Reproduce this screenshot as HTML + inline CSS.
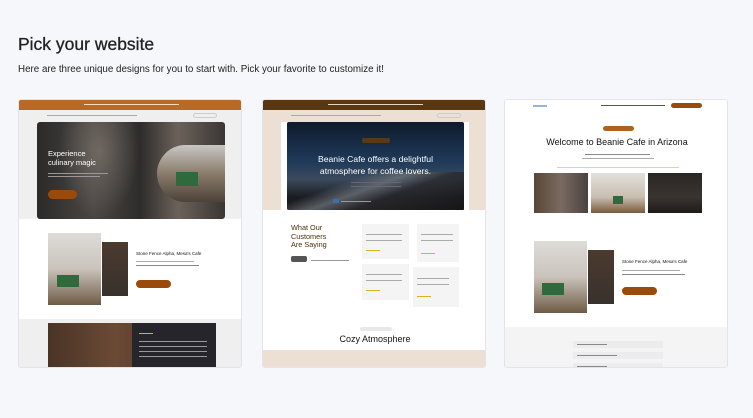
<!DOCTYPE html>
<html><head><meta charset="utf-8"><style>
*{margin:0;padding:0;box-sizing:border-box}
body{width:753px;height:418px;background:#f6f7fb;font-family:"Liberation Sans",sans-serif;position:relative;overflow:hidden;color:#1f1f1f}
.a{position:absolute}
h1{position:absolute;left:18px;top:34px;font-size:17.5px;font-weight:normal;color:#222;-webkit-text-stroke:.3px #222}
p.sub{position:absolute;left:18px;top:64px;font-size:9.8px;color:#222}
.card{position:absolute;top:99px;width:224px;height:269px;border:1px solid #e3e4ea;border-radius:3px;overflow:hidden;background:#fff}
.t{position:absolute;white-space:nowrap}
</style></head><body>
<h1>Pick your website</h1>
<p class="sub">Here are three unique designs for you to start with. Pick your favorite to customize it!</p>

<!-- card 1 -->
<div class="card" style="left:18px;background:#efefef">
 <div class="a" style="left:0;top:0;width:224px;height:10px;background:#b86a25"></div>
 <div class="a" style="left:65px;top:4px;width:95px;height:1px;background:#f3dcc4"></div>
 <div class="a" style="left:28px;top:15px;width:90px;height:1px;background:#aaa"></div>
 <div class="a" style="left:174px;top:13px;width:24px;height:5px;border:1px solid #ccc;border-radius:3px"></div>
 <div class="a" style="left:18px;top:22px;width:188px;height:97px;border-radius:3px;overflow:hidden;background:linear-gradient(90deg,#2b2a29 0%,#4a4643 30%,#2e2c2b 55%,#6b625a 75%,#3a3633 100%)">
  <div class="a" style="left:22px;top:0;width:80px;height:97px;background:radial-gradient(ellipse at 50% 30%,#807770 0%,transparent 70%);opacity:.7"></div>
  <div class="a" style="left:120px;top:23px;width:68px;height:57px;border-radius:30px 0 0 30px;background:linear-gradient(180deg,#c8c6c3 0%,#8a7c6c 50%,#4d4238 100%)"></div>
  <div class="a" style="left:139px;top:50px;width:22px;height:14px;background:#2f6a3c"></div>
 </div>
 <div class="t" style="left:29px;top:50px;font-size:7.5px;color:#fff;line-height:8.5px">Experience<br>culinary magic</div>
 <div class="a" style="left:29px;top:73px;width:60px;height:1px;background:#999"></div>
 <div class="a" style="left:29px;top:76px;width:52px;height:1px;background:#999"></div>
 <div class="a" style="left:29px;top:90px;width:29px;height:9px;border-radius:5px;background:#9a4b0c"></div>
 <div class="a" style="left:0;top:119px;width:224px;height:100px;background:#fff"></div>
 <div class="a" style="left:29px;top:133px;width:53px;height:72px;background:linear-gradient(180deg,#dedcd8 0%,#c9c3bb 50%,#6f5b45 100%)"></div>
 <div class="a" style="left:38px;top:175px;width:22px;height:12px;background:#2f6a3c"></div>
 <div class="a" style="left:83px;top:142px;width:26px;height:54px;background:linear-gradient(180deg,#4b3a2e,#38312d)"></div>
 <div class="t" style="left:117px;top:151px;font-size:4.5px;color:#111">Stone Fence Alpha, Mesa's Cafe</div>
 <div class="a" style="left:117px;top:161px;width:58px;height:1px;background:#aaa"></div>
 <div class="a" style="left:117px;top:165px;width:63px;height:1px;background:#888"></div>
 <div class="a" style="left:117px;top:180px;width:35px;height:8px;border-radius:4px;background:#9a4b0c"></div>
 <div class="a" style="left:29px;top:223px;width:168px;height:46px;background:linear-gradient(90deg,#4a3326,#6b4a35 40%,#3d2b22)"></div>
 <div class="a" style="left:113px;top:223px;width:84px;height:46px;background:#26252b"></div>
 <div class="a" style="left:120px;top:233px;width:14px;height:1px;background:#e0b020"></div>
 <div class="a" style="left:120px;top:241px;width:68px;height:1px;background:#999"></div>
 <div class="a" style="left:120px;top:246px;width:68px;height:1px;background:#999"></div>
 <div class="a" style="left:120px;top:251px;width:68px;height:1px;background:#999"></div>
 <div class="a" style="left:120px;top:256px;width:68px;height:1px;background:#999"></div>
</div>

<!-- card 2 -->
<div class="card" style="left:262px">
 <div class="a" style="left:0;top:0;width:224px;height:10px;background:#583712"></div>
 <div class="a" style="left:65px;top:4px;width:95px;height:1px;background:#e6d6c2"></div>
 <div class="a" style="left:0;top:10px;width:224px;height:100px;background:#ece0d4"></div>
 <div class="a" style="left:28px;top:15px;width:90px;height:1px;background:#aaa"></div>
 <div class="a" style="left:174px;top:13px;width:24px;height:5px;border:1px solid #ccc;border-radius:3px"></div>
 <div class="a" style="left:18px;top:22px;width:188px;height:88px;background:#fff"></div>
 <div class="a" style="left:24px;top:22px;width:177px;height:88px;border-radius:2px;background:linear-gradient(180deg,#0e1a2c 0%,#1f3a5a 45%,#3b4a5c 65%,#1b1d22 85%,#161616 100%)"></div>
 <div class="a" style="left:24px;top:72px;width:177px;height:38px;background:linear-gradient(160deg,transparent 30%,#6a7078 45%,#2a2a2e 60%,#151515 100%);opacity:.8"></div>
 <div class="a" style="left:99px;top:38px;width:28px;height:5px;border-radius:2px;background:#5a3a14"></div>
 <div class="t" style="left:24px;width:177px;text-align:center;top:54px;font-size:8.6px;color:#fff;line-height:11.5px">Beanie Cafe offers a delightful<br>atmosphere for coffee lovers.</div>
 <div class="a" style="left:88px;top:82px;width:50px;height:1px;background:#667"></div>
 <div class="a" style="left:88px;top:86px;width:50px;height:1px;background:#667"></div>
 <div class="a" style="left:70px;top:99px;width:6px;height:4px;background:#3b6fa8"></div>
 <div class="a" style="left:78px;top:101px;width:30px;height:1px;background:#999"></div>
 <div class="t" style="left:28px;top:124px;font-size:7.3px;color:#4a2e0a;line-height:8.7px">What Our<br>Customers<br>Are Saying</div>
 <div class="a" style="left:28px;top:156px;width:16px;height:6px;background:#555;border-radius:2px"></div>
 <div class="a" style="left:48px;top:160px;width:38px;height:1px;background:#999"></div>
 <div class="a" style="left:99px;top:124px;width:47px;height:35px;background:#f4f4f4"></div>
 <div class="a" style="left:154px;top:124px;width:42px;height:38px;background:#f4f4f4"></div>
 <div class="a" style="left:99px;top:164px;width:47px;height:36px;background:#f4f4f4"></div>
 <div class="a" style="left:150px;top:167px;width:46px;height:40px;background:#f4f4f4"></div>
 <div class="a" style="left:103px;top:134px;width:36px;height:1px;background:#aaa"></div>
 <div class="a" style="left:103px;top:140px;width:36px;height:1px;background:#aaa"></div>
 <div class="a" style="left:158px;top:134px;width:32px;height:1px;background:#aaa"></div>
 <div class="a" style="left:158px;top:140px;width:32px;height:1px;background:#aaa"></div>
 <div class="a" style="left:103px;top:174px;width:36px;height:1px;background:#aaa"></div>
 <div class="a" style="left:103px;top:180px;width:36px;height:1px;background:#aaa"></div>
 <div class="a" style="left:154px;top:178px;width:32px;height:1px;background:#aaa"></div>
 <div class="a" style="left:154px;top:184px;width:32px;height:1px;background:#aaa"></div>
 <div class="a" style="left:103px;top:150px;width:14px;height:1px;background:#e0b020"></div>
 <div class="a" style="left:158px;top:153px;width:14px;height:1px;background:#e0b020"></div>
 <div class="a" style="left:103px;top:190px;width:14px;height:1px;background:#e0b020"></div>
 <div class="a" style="left:154px;top:196px;width:14px;height:1px;background:#e0b020"></div>
 <div class="a" style="left:97px;top:227px;width:32px;height:4px;border-radius:2px;background:#e8e8e8"></div>
 <div class="t" style="left:0;width:224px;text-align:center;top:234px;font-size:9px;color:#111">Cozy Atmosphere</div>
 <div class="a" style="left:0;top:250px;width:224px;height:19px;background:#ece0d4"></div>
 <div class="a" style="left:118px;top:267px;width:78px;height:2px;background:#555"></div>
</div>

<!-- card 3 -->
<div class="card" style="left:504px">
 <div class="a" style="left:28px;top:5px;width:14px;height:2px;background:#9ab4d8"></div>
 <div class="a" style="left:96px;top:5px;width:64px;height:1px;background:#555"></div>
 <div class="a" style="left:166px;top:3px;width:31px;height:5px;border-radius:3px;background:#9a4b0c"></div>
 <div class="a" style="left:98px;top:26px;width:31px;height:5px;border-radius:3px;background:#b0621c"></div>
 <div class="t" style="left:0;width:224px;text-align:center;top:37px;font-size:9px;color:#111">Welcome to Beanie Cafe in Arizona</div>
 <div class="a" style="left:80px;top:54px;width:65px;height:1px;background:#888"></div>
 <div class="a" style="left:77px;top:58px;width:72px;height:1px;background:#aaa"></div>
 <div class="a" style="left:52px;top:67px;width:122px;height:1px;background:#e8d090"></div>
 <div class="a" style="left:29px;top:73px;width:54px;height:40px;background:linear-gradient(90deg,#5a4638,#7a6a60 50%,#4a4240)"></div>
 <div class="a" style="left:86px;top:73px;width:54px;height:40px;background:linear-gradient(180deg,#e2e0dc,#c8beb0 60%,#7a5a3c)"></div>
 <div class="a" style="left:108px;top:96px;width:10px;height:8px;background:#2f6a3c"></div>
 <div class="a" style="left:143px;top:73px;width:54px;height:40px;background:linear-gradient(180deg,#2a2624,#3a3430 60%,#1e1c1a)"></div>
 <div class="a" style="left:29px;top:141px;width:53px;height:72px;background:linear-gradient(180deg,#dedcd8 0%,#c9c3bb 50%,#6f5b45 100%)"></div>
 <div class="a" style="left:37px;top:183px;width:22px;height:12px;background:#2f6a3c"></div>
 <div class="a" style="left:83px;top:150px;width:26px;height:54px;background:linear-gradient(180deg,#4b3a2e,#38312d)"></div>
 <div class="t" style="left:117px;top:159px;font-size:4.5px;color:#111">Stone Fence Alpha, Mesa's Cafe</div>
 <div class="a" style="left:117px;top:170px;width:58px;height:1px;background:#aaa"></div>
 <div class="a" style="left:117px;top:174px;width:63px;height:1px;background:#888"></div>
 <div class="a" style="left:117px;top:187px;width:35px;height:8px;border-radius:4px;background:#9a4b0c"></div>
 <div class="a" style="left:0;top:227px;width:224px;height:42px;background:#f4f4f4"></div>
 <div class="a" style="left:68px;top:241px;width:90px;height:7px;background:#ececec"></div>
 <div class="a" style="left:68px;top:252px;width:90px;height:7px;background:#ececec"></div>
 <div class="a" style="left:68px;top:263px;width:90px;height:6px;background:#ececec"></div>
 <div class="a" style="left:72px;top:244px;width:30px;height:1px;background:#888"></div>
 <div class="a" style="left:72px;top:255px;width:40px;height:1px;background:#888"></div>
 <div class="a" style="left:72px;top:266px;width:30px;height:1px;background:#888"></div>
</div>
</body></html>
